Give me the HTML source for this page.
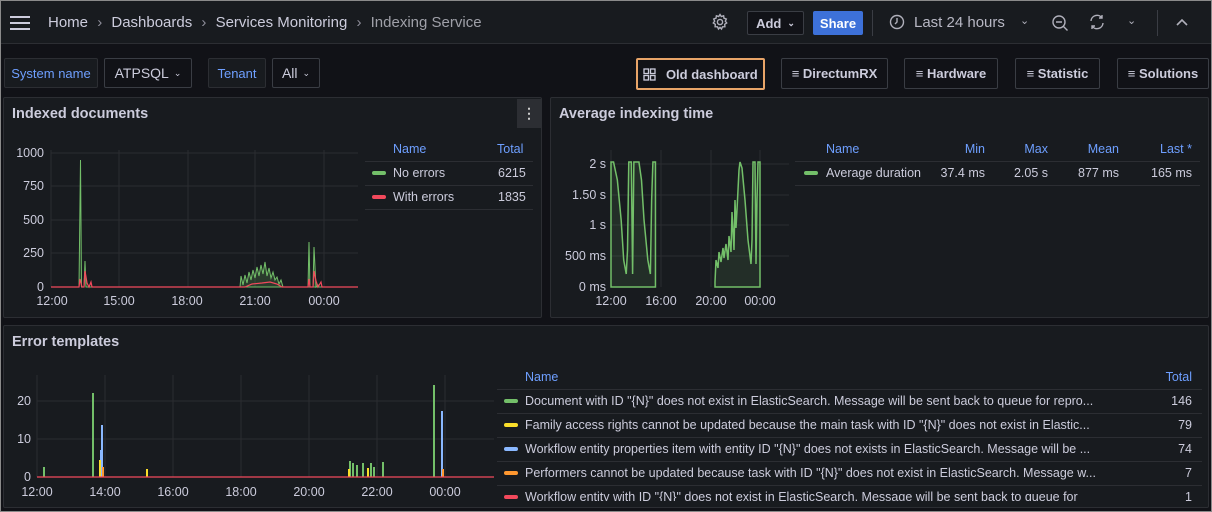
<!DOCTYPE html><html><head><style>
*{box-sizing:border-box;margin:0;padding:0}
body{width:1212px;height:512px;background:#111217;font-family:"Liberation Sans",sans-serif;color:#ccccdc;position:relative;overflow:hidden}
.abs{position:absolute}
.top{left:0;top:0;width:1212px;height:44px;background:#181b1f;border-bottom:1px solid #2c2e33}
.t{position:absolute;white-space:nowrap}
.btn{position:absolute;border:1px solid #3a3d44;border-radius:2px;background:#111217;font-size:13px;font-weight:bold;color:#ccccdc;display:flex;align-items:center;justify-content:center;gap:6px}
.var{position:absolute;border:1px solid #2c2e33;border-radius:2px;background:#181b1f;font-size:13px;color:#6e9fff;display:flex;align-items:center;justify-content:center}
.val{position:absolute;border:1px solid #3a3d44;border-radius:2px;background:#111217;font-size:14px;color:#ccccdc;display:flex;align-items:center;justify-content:center;gap:5px}
.panel{position:absolute;background:#181b1f;border:1px solid #2c2e33;border-radius:2px}
.title{position:absolute;font-size:14.5px;font-weight:bold;color:#ccccdc}
.lg{position:absolute;font-size:12.5px;color:#ccccdc;white-space:nowrap}
.hd{color:#6e9fff}
.line{position:absolute;height:1px;background:#2c2e33}
.sw{position:absolute;width:14px;height:4px;border-radius:2px}
.ham span{display:block;width:20px;height:2px;background:#ccccdc;margin-bottom:4px}
</style></head><body>
<div class="abs top"></div>
<div class="abs ham" style="left:10px;top:16px"><span></span><span></span><span></span></div>
<div class="t" style="left:48px;top:14px;font-size:15px;color:#ccccdc">Home <span style="color:#8e8e9a;margin:0 5px">›</span> Dashboards <span style="color:#8e8e9a;margin:0 5px">›</span> Services Monitoring <span style="color:#8e8e9a;margin:0 5px">›</span> <span style="color:#9fa0a8">Indexing Service</span></div>
<svg class="abs" style="left:711px;top:13px" width="18" height="18" viewBox="0 0 18 18" fill="none" stroke="#b0b0bb" stroke-width="1.4"><circle cx="9" cy="9" r="2.6"/><path d="M9 1.5l1.3 2 2.3-.7.4 2.4 2.3.8-1 2.2 1.4 1.8-2 1.3.2 2.4-2.4.1-1 2.2-1.5-1.6-1.5 1.6-1-2.2-2.4-.1.2-2.4-2-1.3 1.4-1.8-1-2.2 2.3-.8.4-2.4 2.3.7z"/></svg>
<div class="btn" style="left:747px;top:11px;width:57px;height:24px">Add <span style="font-size:9px">⌄</span></div>
<div class="btn" style="left:813px;top:11px;width:50px;height:24px;background:#3d71d9;border-color:#3d71d9;color:#fff">Share</div>
<div class="abs" style="left:872px;top:10px;width:1px;height:26px;background:#3a3d44"></div>
<svg class="abs" style="left:889px;top:14px" width="16" height="16" viewBox="0 0 16 16" fill="none" stroke="#b0b0bb" stroke-width="1.4"><circle cx="8" cy="8" r="6.5"/><path d="M8 4v4l-2 2"/></svg>
<div class="t" style="left:914px;top:14px;font-size:15px;color:#b8b8c4">Last 24 hours</div>
<div class="t" style="left:1020px;top:14px;font-size:11px;color:#b0b0bb">⌄</div>
<svg class="abs" style="left:1051px;top:14px" width="18" height="18" viewBox="0 0 18 18" fill="none" stroke="#b0b0bb" stroke-width="1.4"><circle cx="8" cy="8" r="6"/><path d="M5 8h6M12.5 12.5l4 4"/></svg>
<svg class="abs" style="left:1088px;top:13px" width="18" height="18" viewBox="0 0 18 18" fill="none" stroke="#b0b0bb" stroke-width="1.4"><path d="M3 8a6 6 0 0 1 11-3M15 10a6 6 0 0 1-11 3M14 2v3h-3M4 16v-3h3"/></svg>
<div class="t" style="left:1127px;top:14px;font-size:11px;color:#b0b0bb">⌄</div>
<div class="abs" style="left:1157px;top:10px;width:1px;height:26px;background:#3a3d44"></div>
<svg class="abs" style="left:1176px;top:18px" width="12" height="8" viewBox="0 0 12 8" fill="none" stroke="#b0b0bb" stroke-width="1.6"><path d="M1 7l5-5 5 5"/></svg>

<div class="var" style="left:4px;top:58px;width:94px;height:30px">System name</div>
<div class="val" style="left:104px;top:58px;width:88px;height:30px">ATPSQL <span style="font-size:9px">⌄</span></div>
<div class="var" style="left:208px;top:58px;width:58px;height:30px">Tenant</div>
<div class="val" style="left:272px;top:58px;width:48px;height:30px">All <span style="font-size:9px">⌄</span></div>
<div class="btn" style="left:636px;top:58px;width:129px;height:32px;border:2px solid #e8a468">
<svg width="13" height="13" viewBox="0 0 13 13" fill="none" stroke="#ccccdc" stroke-width="1.3"><rect x="1" y="1" width="4.5" height="4.5"/><rect x="7.5" y="1" width="4.5" height="4.5"/><rect x="1" y="7.5" width="4.5" height="4.5"/><rect x="7.5" y="7.5" width="4.5" height="4.5"/></svg>&nbsp;Old dashboard</div>
<div class="btn" style="left:781px;top:58px;width:107px;height:31px">≡ DirectumRX</div>
<div class="btn" style="left:904px;top:58px;width:94px;height:31px">≡ Hardware</div>
<div class="btn" style="left:1015px;top:58px;width:85px;height:31px">≡ Statistic</div>
<div class="btn" style="left:1117px;top:58px;width:92px;height:31px">≡ Solutions</div>

<!-- Panel 1 -->
<div class="panel" style="left:3px;top:97px;width:539px;height:221px"></div>
<div class="title" style="left:12px;top:106px">Indexed documents</div>
<div class="abs" style="left:517px;top:99px;width:24px;height:29px;background:#2c2e33;color:#ccc;font-size:14px;text-align:center;line-height:29px;font-weight:bold">⋮</div>
<svg class="abs" style="left:0;top:140px" width="370" height="175" font-family="Liberation Sans" font-size="12.5" fill="#ccccdc">
<g stroke="#2a2c31"><line x1="51" y1="13" x2="358" y2="13"/><line x1="51" y1="46" x2="358" y2="46"/><line x1="51" y1="80" x2="358" y2="80"/><line x1="51" y1="113" x2="358" y2="113"/><line x1="51" y1="10" x2="51" y2="147"/><line x1="119" y1="10" x2="119" y2="147"/><line x1="188" y1="10" x2="188" y2="147"/><line x1="255" y1="10" x2="255" y2="147"/><line x1="324" y1="10" x2="324" y2="147"/></g>
<g text-anchor="end"><text x="44" y="17">1000</text><text x="44" y="50">750</text><text x="44" y="84">500</text><text x="44" y="117">250</text><text x="44" y="151">0</text></g>
<g text-anchor="middle"><text x="52" y="165">12:00</text><text x="119" y="165">15:00</text><text x="187" y="165">18:00</text><text x="255" y="165">21:00</text><text x="324" y="165">00:00</text></g>
<path d="M51 147H79L80.5 20L81.5 147H84L85 121L86 147H358" stroke="#73bf69" fill="rgba(115,191,105,.15)" stroke-width="1"/>
<path d="M240 147L241 136L243 145L245 135L247 143L249 132L251 140L253 130L255 138L257 127L259 136L261 125L263 134L265 122L267 136L269 128L271 138L273 132L275 140L277 137L279 144L281 140L283 147H308L309 102L310 147L313 147L314 107L316 147L318 145L319 147Z" stroke="#73bf69" fill="rgba(115,191,105,.2)" stroke-width="1"/>
<path d="M51 147H79L80 139L82 147L84 147L85 131L87 143L89 147L91 142L92 147H245L252 144L262 143L270 142L277 144L282 147H308L309 139L310 147H313L314 131L316 141L318 147L321 142L322 147H358" stroke="#f2495c" fill="none" stroke-width="1.2"/>
</svg>
<div class="lg hd" style="left:393px;top:142px">Name</div><div class="lg hd" style="left:497px;top:142px">Total</div>
<div class="line" style="left:365px;top:161px;width:168px"></div>
<div class="sw" style="left:372px;top:171px;background:#73bf69"></div><div class="lg" style="left:393px;top:166px">No errors</div><div class="lg" style="left:498px;top:166px">6215</div>
<div class="line" style="left:365px;top:185px;width:168px"></div>
<div class="sw" style="left:372px;top:195px;background:#f2495c"></div><div class="lg" style="left:393px;top:190px">With errors</div><div class="lg" style="left:498px;top:190px">1835</div>
<div class="line" style="left:365px;top:209px;width:168px"></div>

<!-- Panel 2 -->
<div class="panel" style="left:550px;top:97px;width:659px;height:221px"></div>
<div class="title" style="left:559px;top:106px">Average indexing time</div>
<svg class="abs" style="left:550px;top:140px" width="245" height="175" font-family="Liberation Sans" font-size="12.5" fill="#ccccdc">
<g stroke="#2a2c31"><line x1="61" y1="24" x2="239" y2="24"/><line x1="61" y1="55" x2="239" y2="55"/><line x1="61" y1="85" x2="239" y2="85"/><line x1="61" y1="116" x2="239" y2="116"/><line x1="61" y1="10" x2="61" y2="147"/><line x1="111" y1="10" x2="111" y2="147"/><line x1="161" y1="10" x2="161" y2="147"/><line x1="210" y1="10" x2="210" y2="147"/></g>
<g text-anchor="end"><text x="56" y="28">2 s</text><text x="56" y="59">1.50 s</text><text x="56" y="89">1 s</text><text x="56" y="120">500 ms</text><text x="56" y="151">0 ms</text></g>
<g text-anchor="middle"><text x="61" y="165">12:00</text><text x="111" y="165">16:00</text><text x="161" y="165">20:00</text><text x="210" y="165">00:00</text></g>
<g transform="translate(61,0) scale(1.27,1) translate(-48,0)">
<path vector-effect="non-scaling-stroke" d="M48 147V22L50 22L53 40L56 80L58 120L60 134L61 110L62 22L64 22L65 134L66 22L68 22L70 22L72 40L74 80L77 120L79 134L80 60L81 22L83 22V147Z" fill="rgba(115,191,105,.12)" stroke="#73bf69" stroke-width="1.5"/>
</g>
<g transform="translate(165,0) scale(1.0,1) translate(-131,0)">
<path vector-effect="non-scaling-stroke" d="M131 142L132 120L134 128L135 112L137 122L139 108L140 118L142 104L144 120L145 96L147 112L148 72L150 110L151 60L152 88L153 70L155 30L156 22L158 28L161 60L164 100L167 124L168 100L169 22L171 22L172 124L173 60L174 22L176 22V147H131Z" fill="rgba(115,191,105,.12)" stroke="#73bf69" stroke-width="1.5"/>
</g>
</svg>
<div class="lg hd" style="left:826px;top:142px">Name</div>
<div class="lg hd" style="left:945px;top:142px;width:40px;text-align:right">Min</div>
<div class="lg hd" style="left:1008px;top:142px;width:40px;text-align:right">Max</div>
<div class="lg hd" style="left:1070px;top:142px;width:49px;text-align:right">Mean</div>
<div class="lg hd" style="left:1143px;top:142px;width:49px;text-align:right">Last *</div>
<div class="line" style="left:795px;top:161px;width:405px"></div>
<div class="sw" style="left:804px;top:171px;background:#73bf69"></div>
<div class="lg" style="left:826px;top:166px">Average duration</div>
<div class="lg" style="left:925px;top:166px;width:60px;text-align:right">37.4 ms</div>
<div class="lg" style="left:988px;top:166px;width:60px;text-align:right">2.05 s</div>
<div class="lg" style="left:1059px;top:166px;width:60px;text-align:right">877 ms</div>
<div class="lg" style="left:1132px;top:166px;width:60px;text-align:right">165 ms</div>
<div class="line" style="left:795px;top:185px;width:405px"></div>

<!-- Panel 3 -->
<div class="panel" style="left:3px;top:325px;width:1206px;height:183px"></div>
<div class="title" style="left:12px;top:334px">Error templates</div>
<svg class="abs" style="left:0;top:365px" width="500" height="140" font-family="Liberation Sans" font-size="12.5" fill="#ccccdc">
<g stroke="#2a2c31"><line x1="37" y1="36" x2="494" y2="36"/><line x1="37" y1="74" x2="494" y2="74"/><line x1="37" y1="10" x2="37" y2="112"/><line x1="105" y1="10" x2="105" y2="112"/><line x1="173" y1="10" x2="173" y2="112"/><line x1="241" y1="10" x2="241" y2="112"/><line x1="309" y1="10" x2="309" y2="112"/><line x1="377" y1="10" x2="377" y2="112"/><line x1="445" y1="10" x2="445" y2="112"/></g>
<g text-anchor="end"><text x="31" y="40">20</text><text x="31" y="78">10</text><text x="31" y="116">0</text></g>
<g text-anchor="middle"><text x="37" y="131">12:00</text><text x="105" y="131">14:00</text><text x="173" y="131">16:00</text><text x="241" y="131">18:00</text><text x="309" y="131">20:00</text><text x="377" y="131">22:00</text><text x="445" y="131">00:00</text></g>
<g stroke-width="2"><path d="M44 112V102M93 112V28M350 112V96M353 112V98M357 112V100M363 112V98M371 112V98M374 112V102M383 112V97M434 112V20" stroke="#73bf69"/><path d="M102 112V60M101 112V85M442 112V46" stroke="#8ab8ff"/><path d="M147 112V104M349 112V104M368 112V103M100 112V95" stroke="#fade2a"/><path d="M103 112V102M443 112V104" stroke="#ff9830"/></g>
<line x1="37" y1="112" x2="494" y2="112" stroke="#f2495c" stroke-width="1.2"/>
</svg>
<div class="lg hd" style="left:525px;top:370px">Name</div><div class="lg hd" style="left:1152px;top:370px;width:40px;text-align:right">Total</div>
<div style="position:absolute;left:497px;top:389px;width:705px;height:112px;overflow:hidden">
<div class="line" style="left:0;top:0;width:705px"></div>
<div class="sw" style="left:7px;top:10px;background:#73bf69"></div><div class="lg" style="left:28px;top:5px">Document with ID "{N}" does not exist in ElasticSearch. Message will be sent back to queue for repro...</div><div class="lg" style="left:635px;top:5px;width:60px;text-align:right">146</div>
<div class="line" style="left:0;top:24px;width:705px"></div>
<div class="sw" style="left:7px;top:34px;background:#fade2a"></div><div class="lg" style="left:28px;top:29px">Family access rights cannot be updated because the main task with ID "{N}" does not exist in Elastic...</div><div class="lg" style="left:635px;top:29px;width:60px;text-align:right">79</div>
<div class="line" style="left:0;top:48px;width:705px"></div>
<div class="sw" style="left:7px;top:58px;background:#8ab8ff"></div><div class="lg" style="left:28px;top:53px">Workflow entity properties item with entity ID "{N}" does not exists in ElasticSearch. Message will be ...</div><div class="lg" style="left:635px;top:53px;width:60px;text-align:right">74</div>
<div class="line" style="left:0;top:72px;width:705px"></div>
<div class="sw" style="left:7px;top:82px;background:#ff9830"></div><div class="lg" style="left:28px;top:77px">Performers cannot be updated because task with ID "{N}" does not exist in ElasticSearch. Message w...</div><div class="lg" style="left:635px;top:77px;width:60px;text-align:right">7</div>
<div class="line" style="left:0;top:96px;width:705px"></div>
<div class="sw" style="left:7px;top:106px;background:#f2495c"></div><div class="lg" style="left:28px;top:101px">Workflow entity with ID "{N}" does not exist in ElasticSearch. Message will be sent back to queue for</div><div class="lg" style="left:635px;top:101px;width:60px;text-align:right">1</div>
</div>
<div class="abs" style="left:0;top:0;width:1212px;height:512px;border:1px solid #8a8a8a;pointer-events:none"></div>
</body></html>
